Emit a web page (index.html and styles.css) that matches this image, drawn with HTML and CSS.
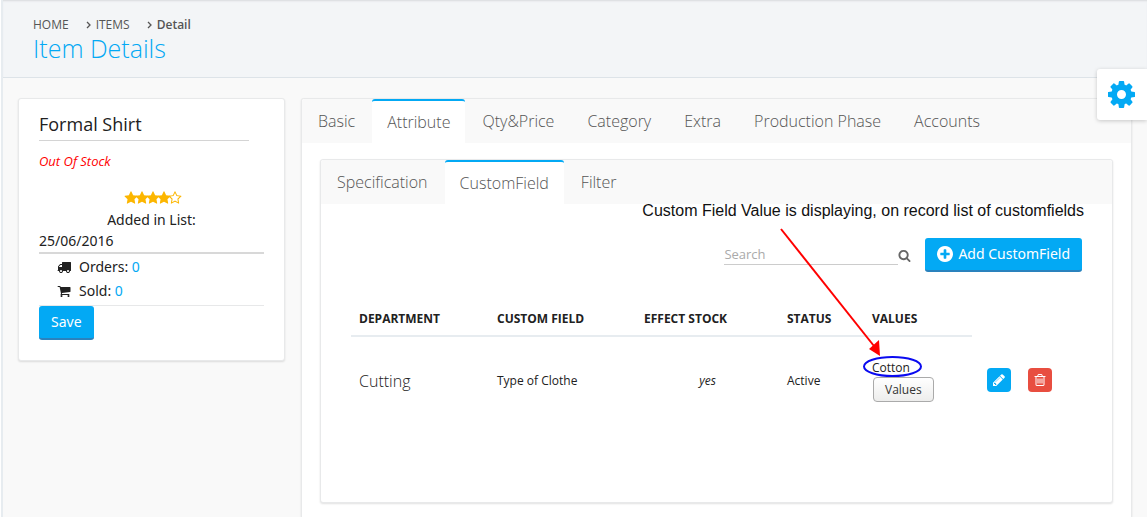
FILE: index.html
```html
<!DOCTYPE html>
<html lang="en">
<head>
<meta charset="utf-8">
<title>Item Details</title>
<link rel="stylesheet" href="styles.css">
</head>
<body>
<svg class="sprite" aria-hidden="true">
  <symbol id="star" viewBox="0 0 1792 1792"><path d="M1728 647q0 22-26 48l-363 354 86 500q1 7 1 20 0 21-10.5 35.5t-30.5 14.5q-19 0-40-12l-449-236-449 236q-22 12-40 12-21 0-31.5-14.5t-10.5-35.5q0-6 2-20l86-500-364-354q-25-27-25-48 0-37 56-46l502-73 225-455q19-41 49-41t49 41l225 455 502 73q56 9 56 46z"/></symbol>
  <symbol id="star-o" viewBox="0 0 1792 1792"><path d="M1201 1004l306-297-422-62-189-382-189 382-422 62 306 297-73 421 378-199 377 199zm527-357q0 22-26 48l-363 354 86 500q1 7 1 20 0 50-41 50-19 0-40-12l-449-236-449 236q-22 12-40 12-21 0-31.5-14.5t-10.5-35.5q0-6 2-20l86-500-364-354q-25-27-25-48 0-37 56-46l502-73 225-455q19-41 49-41t49 41l225 455 502 73q56 9 56 46z"/></symbol>
  <symbol id="truck" viewBox="0 0 1792 1792"><path d="M640 1408q0-52-38-90t-90-38-90 38-38 90 38 90 90 38 90-38 38-90zm-384-512h384v-256h-158q-13 0-22 9l-195 195q-9 9-9 22v30zm1280 512q0-52-38-90t-90-38-90 38-38 90 38 90 90 38 90-38 38-90zm256-1088v1024q0 15-4 26.5t-13.5 18.5-16.5 11.5-23.5 6-22.5 2-25.5 0-22.5-.5q0 106-75 181t-181 75-181-75-75-181h-384q0 106-75 181t-181 75-181-75-75-181h-64q-3 0-22.5.5t-25.5 0-22.5-2-23.5-6-16.5-11.5-13.5-18.5-4-26.5q0-26 19-45t45-19v-320q0-8-.5-35t0-38 2.5-34.5 6.5-37 14-30.5 22.5-30l198-198q19-19 50.5-32t58.5-13h160v-192q0-26 19-45t45-19h1024q26 0 45 19t19 45z"/></symbol>
  <symbol id="cart" viewBox="0 0 1792 1792"><path d="M704 1536q0 52-38 90t-90 38-90-38-38-90 38-90 90-38 90 38 38 90zm896 0q0 52-38 90t-90 38-90-38-38-90 38-90 90-38 90 38 38 90zm128-1088v512q0 24-16.5 42.5t-40.5 21.5l-1044 122q13 60 13 70 0 16-24 64h920q26 0 45 19t19 45-19 45-45 19h-1024q-26 0-45-19t-19-45q0-11 8-31.5t16-36 21.5-40 15.5-29.5l-177-823h-204q-26 0-45-19t-19-45 19-45 45-19h256q16 0 28.5 6.5t19.5 15.5 13 24.5 8 26 5.5 29.5 4.5 26h1201q26 0 45 19t19 45z"/></symbol>
  <symbol id="search" viewBox="0 0 1792 1792"><path d="M1216 832q0-185-131.5-316.5t-316.5-131.5-316.5 131.5-131.5 316.5 131.5 316.5 316.5 131.5 316.5-131.5 131.5-316.5zm512 832q0 52-38 90t-90 38q-54 0-90-38l-343-342q-179 124-399 124-143 0-273.5-55.5t-225-150-150-225-55.5-273.5 55.5-273.5 150-225 225-150 273.5-55.5 273.5 55.5 225 150 150 225 55.5 273.5q0 220-124 399l343 343q37 37 37 90z"/></symbol>
  <symbol id="plus" viewBox="128 128 1536 1536"><path d="M1344 960v-128q0-26-19-45t-45-19h-256v-256q0-26-19-45t-45-19h-128q-26 0-45 19t-19 45v256h-256q-26 0-45 19t-19 45v128q0 26 19 45t45 19h256v256q0 26 19 45t45 19h128q26 0 45-19t19-45v-256h256q26 0 45-19t19-45zm320-64q0 209-103 385.5t-279.5 279.5-385.5 103-385.5-103-279.5-279.5-103-385.5 103-385.5 279.5-279.5 385.5-103 385.5 103 279.5 279.5 103 385.5z"/></symbol>
  <symbol id="pencil" viewBox="0 0 1792 1792"><path d="M491 1536l91-91-235-235-91 91v107h128v128h107zm523-928q0-22-22-22-10 0-17 7l-542 542q-7 7-7 17 0 22 22 22 10 0 17-7l542-542q7-7 7-17zm-54-192l416 416-832 832h-416v-416zm683 96q0 53-37 90l-166 166-416-416 166-165q36-38 90-38 53 0 91 38l235 234q37 39 37 91z"/></symbol>
  <symbol id="trash" viewBox="0 0 1792 1792"><path d="M704 736v576q0 14-9 23t-23 9h-64q-14 0-23-9t-9-23v-576q0-14 9-23t23-9h64q14 0 23 9t9 23zm256 0v576q0 14-9 23t-23 9h-64q-14 0-23-9t-9-23v-576q0-14 9-23t23-9h64q14 0 23 9t9 23zm256 0v576q0 14-9 23t-23 9h-64q-14 0-23-9t-9-23v-576q0-14 9-23t23-9h64q14 0 23 9t9 23zm128 724v-948h-896v948q0 22 7 40.5t14.5 27 10.5 8.5h832q3 0 10.5-8.5t14.5-27 7-40.5zm-672-1076h448l-48-117q-7-9-17-11h-317q-10 2-17 11zm928 32v64q0 14-9 23t-23 9h-96v948q0 83-47 143.5t-113 60.5h-832q-66 0-113-58.5t-47-141.5v-952h-96q-14 0-23-9t-9-23v-64q0-14 9-23t23-9h309l70-167q15-37 54-63t79-26h320q40 0 79 26t54 63l70 167h309q14 0 23 9t9 23z"/></symbol>
  <symbol id="cog" viewBox="128 128 1536 1536"><path d="M1152 896q0-106-75-181t-181-75-181 75-75 181 75 181 181 75 181-75 75-181zm512-109v222q0 12-8 23t-20 13l-185 28q-19 54-39 91 35 50 107 138 10 12 10 25t-9 23q-27 37-99 108t-94 71q-12 0-26-9l-138-108q-44 23-91 38-16 136-29 186-7 28-36 28h-222q-14 0-24.5-8.5t-11.5-21.5l-28-184q-49-16-90-37l-141 107q-10 9-25 9-14 0-25-11-126-114-165-168-7-10-7-23 0-12 8-23 15-21 51-66.5t54-70.5q-27-50-41-99l-183-27q-13-2-21-12.5t-8-23.5v-222q0-12 8-23t19-13l186-28q14-46 39-92-40-57-107-138-10-12-10-24 0-10 9-23 26-36 98.5-107.5t94.5-71.5q13 0 26 10l138 107q44-23 91-38 16-136 29-186 7-28 36-28h222q14 0 24.5 8.5t11.5 21.5l28 184q49 16 90 37l142-107q9-9 24-9 13 0 25 10 129 119 165 170 7 8 7 22 0 12-8 23-15 21-51 66.5t-54 70.5q26 50 41 98l183 28q13 2 21 12.5t8 23.5z"/></symbol>
  <symbol id="angle" viewBox="0 0 5 8"><path d="M1 1l3 3-3 3" fill="none" stroke="currentColor" stroke-width="1.3"/></symbol>
</svg>

<header class="page-head">
  <nav aria-label="Breadcrumb">
    <ol class="crumbs">
      <li><a href="#">HOME</a></li>
      <li><svg class="angle"><use href="#angle"/></svg><a href="#">ITEMS</a></li>
      <li class="current"><svg class="angle"><use href="#angle"/></svg>Detail</li>
    </ol>
  </nav>
  <h1 class="title">Item Details</h1>
</header>

<button class="settings" type="button" aria-label="Settings"><svg class="cog"><use href="#cog"/></svg></button>

<main class="content">
  <aside class="card summary">
    <h2 class="name">Formal Shirt</h2>
    <p class="stock">Out Of Stock</p>
    <div class="stars" role="img" aria-label="4 of 5 stars">
      <svg><use href="#star"/></svg><svg><use href="#star"/></svg><svg><use href="#star"/></svg><svg><use href="#star"/></svg><svg><use href="#star-o"/></svg>
    </div>
    <p class="added">Added in List:</p>
    <p class="date">25/06/2016</p>
    <ul class="counts">
      <li><svg><use href="#truck"/></svg><span>Orders: <a href="#">0</a></span></li>
      <li><svg><use href="#cart"/></svg><span>Sold: <a href="#">0</a></span></li>
    </ul>
    <button class="btn" type="button">Save</button>
  </aside>

  <section class="card details">
    <nav class="tabs">
      <a href="#">Basic</a>
      <a href="#" class="active">Attribute</a>
      <a href="#">Qty&amp;Price</a>
      <a href="#">Category</a>
      <a href="#">Extra</a>
      <a href="#">Production Phase</a>
      <a href="#">Accounts</a>
    </nav>
    <div class="card panel">
      <nav class="tabs">
        <a href="#">Specification</a>
        <a href="#" class="active">CustomField</a>
        <a href="#">Filter</a>
      </nav>
      <div class="panel-body">
        <div class="toolbar">
          <div class="search">
            <input type="text" placeholder="Search" aria-label="Search">
            <button class="search-btn" type="button" aria-label="Search"><svg><use href="#search"/></svg></button>
          </div>
          <button class="btn add" type="button"><svg><use href="#plus"/></svg>Add CustomField</button>
        </div>
        <table class="fields">
          <colgroup><col class="c-dept"><col class="c-field"><col class="c-stock"><col class="c-status"><col class="c-values"><col></colgroup>
          <thead>
            <tr><th>DEPARTMENT</th><th>CUSTOM FIELD</th><th>EFFECT STOCK</th><th>STATUS</th><th>VALUES</th><td></td></tr>
          </thead>
          <tbody>
            <tr>
              <td class="dept">Cutting</td>
              <td>Type of Clothe</td>
              <td class="stock-flag">yes</td>
              <td>Active</td>
              <td><div class="values"><span>Cotton</span><button class="native" type="button">Values</button></div></td>
              <td><div class="actions"><button class="icon-btn edit" type="button" aria-label="Edit"><svg><use href="#pencil"/></svg></button><button class="icon-btn delete" type="button" aria-label="Delete"><svg><use href="#trash"/></svg></button></div></td>
            </tr>
          </tbody>
        </table>
      </div>
      <p class="note">Custom Field Value is displaying, on record list of customfields</p>
      <svg class="marks" viewBox="0 0 160 160" aria-hidden="true">
        <path d="M11 9L104 126" stroke="#f00" stroke-width="2"/>
        <path d="M110 136L99 129 109 120z" fill="#f00"/>
        <ellipse cx="122.500" cy="146.500" rx="28.500" ry="9.500" fill="none" stroke="#0a0af0" stroke-width="2"/>
      </svg>
    </div>
  </section>
</main>
</body>
</html>
```

FILE: styles.css
```css
* { box-sizing: border-box; }

html { background: #fff; }
body {
  margin: 0 0 0 1px;
  min-height: 100vh;
  display: flex;
  flex-direction: column;
  border-left: 2px solid #e7ecf0;
  background: #f9f9f9;
  color: #212121;
  font: 14px/20px "Noto Sans", "Open Sans", sans-serif;
  position: relative;
}

h1, h2, p, ul, ol { margin: 0; padding: 0; font-weight: 400; }
ul, ol { list-style: none; }
a { color: #03a9f4; text-decoration: none; }
svg { fill: currentColor; flex: none; }
button { font: inherit; cursor: pointer; }
.sprite { position: absolute; width: 0; height: 0; }

.page-head {
  height: 78px;
  padding: 17px 30px 0;
  background: #f3f5f7;
  border-bottom: 1px solid #dde3e8;
  box-shadow: inset 0 2px 2px -1px #d8dadd;
}
.crumbs { display: flex; gap: 17px; font: 12px/16px "Open Sans", sans-serif; color: #555; }
.crumbs li { display: flex; align-items: center; gap: 5px; }
.crumbs a { color: inherit; }
.crumbs .current { font-weight: 600; }
.angle { width: 5px; height: 8px; }
.title { font: 300 25px/30px "Open Sans", sans-serif; color: #03a9f4; }

.settings {
  position: absolute;
  top: 69px;
  right: 0;
  width: 50px;
  height: 51px;
  padding: 0 2px 0 0;
  display: flex;
  align-items: center;
  justify-content: center;
  border: 0;
  border-radius: 3px 0 0 3px;
  background: #fff;
  color: #03a9f4;
  box-shadow: 0 1px 4px rgba(0, 0, 0, .2);
  z-index: 2;
}
.cog { width: 27px; height: 27px; }

.content {
  flex: 1;
  display: grid;
  grid-template-columns: 267fr 831fr;
  align-items: start;
  gap: 16px;
  padding: 20px 15px 0;
}
.card {
  background: #fff;
  border: 1px solid #e8e9ea;
  border-radius: 3px;
  box-shadow: 0 1px 2px rgba(0, 0, 0, .12);
}

.summary { padding: 13px 20px 20px; }
.name {
  margin-right: 15px;
  padding-bottom: 4px;
  border-bottom: 1px solid #d4d4d4;
  font: 18px/24px "Open Sans", sans-serif;
}
.stock { margin-top: 10px; font: italic 13px/20px "Open Sans", sans-serif; color: #f00; }
.stars { display: flex; justify-content: center; margin-top: 20px; color: #fcb600; }
.stars svg { width: 14px; height: 14px; margin-right: -3px; overflow: visible; }
.added { margin-top: 5px; text-align: center; }
.date { padding: 1px 0; border-bottom: 2px solid #d8d8d8; }
.counts { padding: 1px 0 2px 18px; border-bottom: 1px solid #e7e8e9; }
.counts li { display: flex; align-items: center; gap: 8px; height: 24px; }
.counts svg { width: 14px; height: 14px; }

.btn {
  display: inline-flex;
  align-items: center;
  gap: 5px;
  height: 34px;
  padding: 0 12px;
  border: 0;
  border-bottom: 2px solid #2a82bd;
  border-radius: 3px;
  background: #03a9f4;
  color: #fff;
}
.btn svg { width: 16px; height: 16px; }

.details { align-self: stretch; padding-bottom: 14px; border-bottom: 0; border-radius: 3px 3px 0 0; }
.tabs {
  display: flex;
  gap: 1px;
  height: 44px;
  background: #f9f9f9;
  border-radius: 3px 3px 0 0;
  font: 300 16px/24px "Open Sans", sans-serif;
}
.tabs a { padding: 10px 16px; color: #555; }
.tabs .active {
  padding: 9px 15px;
  border-top: 2px solid #03a9f4;
  border-radius: 3px 3px 0 0;
  background: #fff;
}
.panel { position: relative; margin: 16px 18px 0; min-height: 344px; }
.panel-body { padding: 34px 30px; }

.toolbar { display: flex; justify-content: flex-end; gap: 14px; }
.search { display: flex; }
.search input {
  width: 174px;
  height: 27px;
  padding: 5px 0 0;
  border: 0;
  border-bottom: 1px solid #ccc;
  background: none;
  font: 13px/20px "Open Sans", sans-serif;
  color: #333;
}
.search input::placeholder { color: #aaa; }
.search-btn { display: flex; padding: 11px 0 0; border: 0; background: none; color: #666; }
.search-btn svg { width: 13px; height: 13px; }

.fields {
  width: 100%;
  margin-top: 29px;
  table-layout: fixed;
  border-collapse: collapse;
  font: 12px/18px "Open Sans", sans-serif;
}
.c-dept { width: 138px; }
.c-field { width: 147px; }
.c-stock { width: 143px; }
.c-status { width: 85px; }
.c-values { width: 108px; }
.fields th {
  padding: 9px 8px 7px;
  border-bottom: 2px solid #e7ecf0;
  font-weight: 700;
  text-align: left;
}
.fields tbody td { height: 88px; padding: 0 8px; }
.fields .dept { font-size: 16px; font-weight: 300; }
.fields .stock-flag { font-style: italic; text-align: center; }
.values { display: flex; flex-direction: column; align-items: flex-start; }
.native {
  height: 25px;
  margin-left: 1px;
  padding: 0 11px;
  border: 1px solid #aaa;
  border-radius: 4px;
  background: linear-gradient(#fff, #ededec);
  color: #333;
}
.actions { display: flex; gap: 17px; padding-left: 7px; }
.icon-btn {
  width: 24px;
  height: 24px;
  padding: 0;
  display: flex;
  align-items: center;
  justify-content: center;
  border: 0;
  border-radius: 4px;
  color: #fff;
}
.icon-btn svg { width: 14px; height: 14px; }
.edit { background: #03a9f4; }
.delete { background: #e84e40; }

.note {
  position: absolute;
  top: 41px;
  right: 28px;
  font: 16px/20px "Liberation Sans", Arial, sans-serif;
  color: #111;
}
.marks { position: absolute; top: 60px; right: 182px; width: 160px; height: 160px; pointer-events: none; }
```
